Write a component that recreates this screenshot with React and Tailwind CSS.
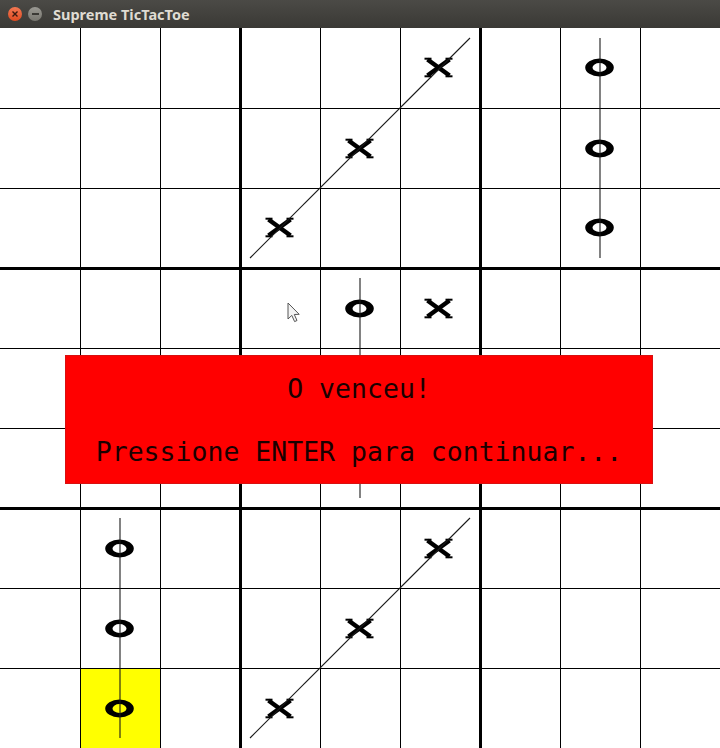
import React from "react";

const marks = {
  "0,5": "X", "1,4": "X", "2,3": "X",
  "0,7": "O", "1,7": "O", "2,7": "O",
  "3,4": "O", "4,4": "O", "5,4": "O", "3,5": "X",
  "6,1": "O", "7,1": "O", "8,1": "O",
  "6,5": "X", "7,4": "X", "8,3": "X",
};

function XMark() {
  return (
    <svg width="40" height="30" viewBox="-20 -15 40 30">
      <g transform="translate(-1.5 -0.5)" stroke="#000" strokeLinecap="butt">
        <line x1="-11" y1="-8" x2="11" y2="8" strokeWidth="4.5" />
        <line x1="11" y1="-8" x2="-11" y2="8" strokeWidth="4.5" />
        <line x1="-14" y1="-8.8" x2="-7" y2="-8.8" strokeWidth="2" />
        <line x1="7" y1="-8.8" x2="14" y2="-8.8" strokeWidth="2" />
        <line x1="-14" y1="8.8" x2="-7" y2="8.8" strokeWidth="2" />
        <line x1="7" y1="8.8" x2="14" y2="8.8" strokeWidth="2" />
      </g>
    </svg>
  );
}

function OMark() {
  return (
    <svg width="40" height="30" viewBox="-20 -15 40 30">
      <path
        transform="translate(-1.5 -0.5)"
        fillRule="evenodd"
        fill="#000"
        d="M-14.3 0 A14.3 9 0 1 0 14.3 0 A14.3 9 0 1 0 -14.3 0 Z M-7 0 A7 4.4 0 1 1 7 0 A7 4.4 0 1 1 -7 0 Z"
      />
    </svg>
  );
}

function Cell({ r, c }) {
  const left = c === 0 ? "" : c === 3 || c === 6 ? "border-l-2" : "border-l";
  const right = c === 2 || c === 5 ? "border-r" : "";
  const top = r === 0 ? "" : r === 3 || r === 6 ? "border-t-2" : "border-t";
  const bottom = r === 2 || r === 5 ? "border-b" : "";
  const bg = r === 8 && c === 1 ? "bg-[#ffff00]" : "bg-white";
  const m = marks[`${r},${c}`];
  return (
    <div className={`flex items-center justify-center border-black ${left} ${right} ${top} ${bottom} ${bg}`}>
      {m === "X" ? <XMark /> : m === "O" ? <OMark /> : null}
    </div>
  );
}

export default function App() {
  const cells = [];
  for (let r = 0; r < 9; r++) for (let c = 0; c < 9; c++) cells.push(<Cell key={`${r}-${c}`} r={r} c={c} />);
  return (
    <div className="w-[720px] h-[748px] overflow-hidden bg-white flex flex-col">
      <div className="h-[28px] shrink-0 flex items-center bg-gradient-to-b from-[#4b4a46] to-[#3a3935]">
        <div className="ml-[8px] w-[14px] h-[14px] rounded-full bg-gradient-to-b from-[#f37852] to-[#df4a1e] flex items-center justify-center">
          <svg width="8" height="8" viewBox="0 0 8 8">
            <path d="M1.5 1.5 L6.5 6.5 M6.5 1.5 L1.5 6.5" stroke="#3a1a10" strokeWidth="1.4" />
          </svg>
        </div>
        <div className="ml-[6px] w-[14px] h-[14px] rounded-full bg-gradient-to-b from-[#9a9993] to-[#77766f] flex items-center justify-center">
          <div className="w-[7px] h-[1.5px] bg-[#3a3935]" />
        </div>
        <span className="ml-[11px] text-[14.5px] font-bold text-[#dfdbd2] leading-none" style={{ fontFamily: '"Noto Sans", "DejaVu Sans", sans-serif' }}>
          Supreme TicTacToe
        </span>
      </div>
      <div className="relative w-[720px] h-[720px]">
        <div className="grid grid-cols-[repeat(9,80px)] grid-rows-[repeat(9,80px)]">{cells}</div>
        <svg className="absolute inset-0 pointer-events-none" width="720" height="720" viewBox="0 0 720 720">
          <g stroke="#1a1a1a" strokeWidth="1.1">
            <line x1="250" y1="230" x2="470" y2="10" />
            <line x1="600" y1="10" x2="600" y2="230" />
            <line x1="360" y1="250" x2="360" y2="470" />
            <line x1="120" y1="490" x2="120" y2="710" />
            <line x1="250" y1="710" x2="470" y2="490" />
          </g>
        </svg>
        <svg className="absolute left-[287px] top-[274px] pointer-events-none" width="14" height="21" viewBox="0 0 14 21">
          <path d="M1 1 L1 17 L4.8 13.4 L7.6 19.6 L10 18.5 L7.3 12.5 L12.2 12.3 Z" fill="#f4f4f4" stroke="#555" strokeWidth="1" strokeLinejoin="round" />
        </svg>
        <div
          className="absolute left-[65px] top-[327px] w-[588px] h-[129px] bg-[#ff0000] border border-[#d81010] flex flex-col items-center text-[#1a0000] text-[26.5px] leading-[30px]"
          style={{ fontFamily: '"DejaVu Sans Mono", "Liberation Mono", monospace' }}
        >
          <div className="mt-[18px]">O venceu!</div>
          <div className="mt-[33px]">Pressione ENTER para continuar...</div>
        </div>
      </div>
    </div>
  );
}
